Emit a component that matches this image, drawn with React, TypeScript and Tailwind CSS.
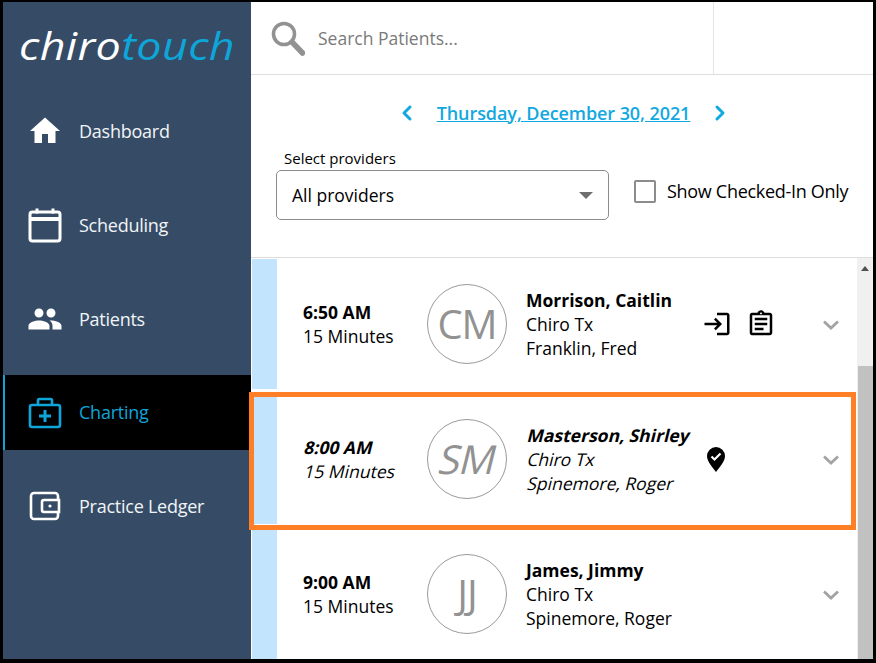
import React from 'react';
import { MdHome, MdPeople, MdLogin, MdOutlineAssignment } from 'react-icons/md';
import { ChevronLeft, ChevronRight } from 'lucide-react';

const font = { fontFamily: '"Open Sans", sans-serif' };

function SearchIcon() {
  return (
    <svg width="34" height="35" viewBox="0 0 34 35" fill="none" stroke="#929292">
      <circle cx="13" cy="13" r="10.500" strokeWidth="3.600" />
      <path d="M21 21l10.500 11" strokeWidth="5.500" strokeLinecap="round" />
    </svg>
  );
}

function CalendarIcon() {
  return (
    <svg width="34" height="36" viewBox="0 0 34 36" fill="none" stroke="white">
      <rect x="2" y="5" width="30" height="29" rx="2.5" strokeWidth="3" />
      <path d="M2 12h30" strokeWidth="4" />
      <path d="M9 1.5v5M25 1.5v5" strokeWidth="3" />
    </svg>
  );
}

function KitIcon() {
  return (
    <svg width="34" height="32" viewBox="0 0 34 32" fill="none" stroke="#0ea5d9" strokeWidth="2.6">
      <rect x="2" y="8" width="30" height="22" rx="2" />
      <path d="M10 8V3.5A1.5 1.5 0 0 1 11.500 2h11A1.500 1.500 0 0 1 24 3.500V8" />
      <path d="M17 13v12M11 19h12" strokeWidth="3" />
    </svg>
  );
}

function WalletIcon() {
  return (
    <svg width="32" height="30" viewBox="0 0 32 30" fill="none" stroke="white" strokeWidth="2.6">
      <rect x="2" y="2" width="27" height="26" rx="3" />
      <path d="M30 9H15a2 2 0 0 0-2 2v8a2 2 0 0 0 2 2h15z" fill="#364c66" />
      <circle cx="21" cy="15" r="1.600" fill="white" stroke="none" />
    </svg>
  );
}

function CheckPin() {
  return (
    <svg width="18" height="25" viewBox="0 0 18 25">
      <path d="M9 0a9 9 0 0 1 9 9c0 5-5 11-9 16C5 20 0 14 0 9a9 9 0 0 1 9-9z" fill="black" />
      <path d="M4.500 9.500l3 3 6-6" fill="none" stroke="white" strokeWidth="2.200" />
    </svg>
  );
}

function RowChevron() {
  return (
    <svg width="16" height="10" viewBox="0 0 16 10" fill="none" stroke="#a3a3a3" strokeWidth="2.800">
      <path d="M1 1.500l7 6.500 7-6.500" />
    </svg>
  );
}

const nav = [
  { label: 'Dashboard', icon: <MdHome size={40} color="white" />, h: 'h-[94px]' },
  { label: 'Scheduling', icon: <CalendarIcon />, h: 'h-[94px]' },
  { label: 'Patients', icon: <MdPeople size={44} color="white" />, h: 'h-[94px] mb-[9px]' },
  { label: 'Charting', icon: <KitIcon />, h: 'h-[75px]', active: true },
  { label: 'Practice Ledger', icon: <WalletIcon />, h: 'h-[112px]' },
];

function NavItem({ label, icon, h, active }: { label: string; icon: React.ReactNode; h: string; active?: boolean }) {
  return (
    <div className={`flex items-center ${h} ${active ? 'bg-black border-l-2 border-[#0ea5d9] pl-[22px] text-[#0ea5d9]' : 'pl-6 text-[#f1f4f7]'}`}>
      <div className="w-9 flex justify-center shrink-0">{icon}</div>
      <span className="ml-[16px] text-[18px] tracking-[-0.25px]">{label}</span>
    </div>
  );
}

const rows = [
  { time: '6:50 AM', initials: 'CM', name: 'Morrison, Caitlin', provider: 'Franklin, Fred', icons: true },
  { time: '8:00 AM', initials: 'SM', name: 'Masterson, Shirley', provider: 'Spinemore, Roger', pin: true, italic: true },
  { time: '9:00 AM', initials: 'JJ', name: 'James, Jimmy', provider: 'Spinemore, Roger' },
];

function Row({ r }: { r: (typeof rows)[number] }) {
  // the highlighted row is a slanted upright face, so the widths stay those of the other rows
  const slant = r.italic ? '-skew-x-[14deg] ml-[1.5px]' : '';
  return (
    <div className="flex h-[130px] items-center">
      <div className="w-[25px] h-full bg-[#c2e4fd] shrink-0" />
      <div className="w-[150px] pl-[26px] shrink-0 text-black text-[17.5px] leading-6">
        <div className={`font-bold ${slant}`}>{r.time}</div>
        <div className={slant}>15 Minutes</div>
      </div>
      <div className="w-20 h-20 rounded-full border border-[#9a9a9a] flex items-center justify-center text-[40px] text-[#929292] tracking-[-1px] shrink-0">
        <span className={`inline-block ${slant}`}>{r.initials}</span>
      </div>
      <div className="ml-[19px] w-[176px] shrink-0 text-black text-[17.5px] leading-6 whitespace-nowrap">
        <div className={`font-bold ${slant}`}>{r.name}</div>
        <div className={slant}>Chiro Tx</div>
        <div className={slant}>{r.provider}</div>
      </div>
      <div className="w-[104px] shrink-0 flex items-center gap-[14px]">
        {r.icons && <MdLogin size={30} color="black" />}
        {r.icons && <MdOutlineAssignment size={30} color="black" />}
        {r.pin && <div className="ml-[5px] flex"><CheckPin /></div>}
      </div>
      <div className="shrink-0 ml-[17px] mt-[2px] flex"><RowChevron /></div>
    </div>
  );
}

export default function App() {
  return (
    <div style={font} className="relative w-[876px] h-[663px] flex bg-black pl-[3px] pt-[2px] pr-[3px] pb-[4px] overflow-hidden">
      <aside className="w-[248px] shrink-0 bg-[#364c66]">
        <div className="h-[82px] pl-[16px] pt-[21px]">
          <span className="inline-block origin-left scale-x-[1.18] text-[38px] leading-[44px] italic tracking-[0.3px] text-white">
            chiro<span className="text-[#0ea5d9]">touch</span>
          </span>
        </div>
        {nav.map((n) => (
          <NavItem key={n.label} {...n} />
        ))}
      </aside>

      <main className="flex-1 flex flex-col bg-white min-w-0">
        <header className="h-[73px] shrink-0 flex border-b border-[#dddddd]">
          <div className="w-[463px] flex items-center pl-[20px] border-r border-[#e5e5e5]">
            <SearchIcon />
            <span className="ml-[13px] text-[17.5px] text-[#7a7a7a]">Search Patients...</span>
          </div>
        </header>

        <div className="h-[183px] shrink-0 border-b border-[#dddddd]">
          <div className="h-[76px] pl-[3px] flex items-center justify-center text-[#12a8e0]">
            <ChevronLeft size={24} strokeWidth={3} />
            <span className="mx-[18px] text-[18px] font-semibold underline tracking-[-0.08px]">Thursday, December 30, 2021</span>
            <ChevronRight size={24} strokeWidth={3} />
          </div>
          <div className="flex pl-[25px]">
            <div>
              <div className="-mt-px text-[15px] leading-[16px] pl-[8px] text-black">Select providers</div>
              <div className="mt-[4px] w-[333px] h-[50px] rounded-[5px] border border-[#8c8c8c] flex items-center justify-between pl-[15px] pr-[15px]">
                <span className="text-[17.5px] text-black">All providers</span>
                <span className="w-0 h-0 border-x-[7px] border-x-transparent border-t-[7px] border-t-[#6e6e6e]" />
              </div>
            </div>
            <div className="ml-[25px] mt-[28px] flex items-center h-[24px]">
              <span className="w-[22px] h-[23px] rounded-[2px] border-2 border-[#8c8c8c]" />
              <span className="ml-[11px] text-[18px] tracking-[-0.3px] text-black whitespace-nowrap">Show Checked-In Only</span>
            </div>
          </div>
        </div>

        <div className="flex-1 flex min-h-0">
          <div className="flex-1 flex flex-col gap-[5px] min-w-0 pl-px pt-px">
            {rows.map((r) => (
              <Row key={r.time} r={r} />
            ))}
          </div>
          <div className="w-[16px] shrink-0 bg-[#f0f0f0] flex flex-col">
            <div className="h-[108px] flex justify-center pt-[8px]">
              <span className="w-0 h-0 border-x-[4px] border-x-transparent border-b-[5px] border-b-[#505050]" />
            </div>
            <div className="flex-1 bg-[#c1c1c1] ml-px" />
          </div>
        </div>
      </main>

      <div className="absolute left-[249px] top-[392px] w-[607px] h-[138px] border-[5px] border-[#ff7f27]" />
    </div>
  );
}
